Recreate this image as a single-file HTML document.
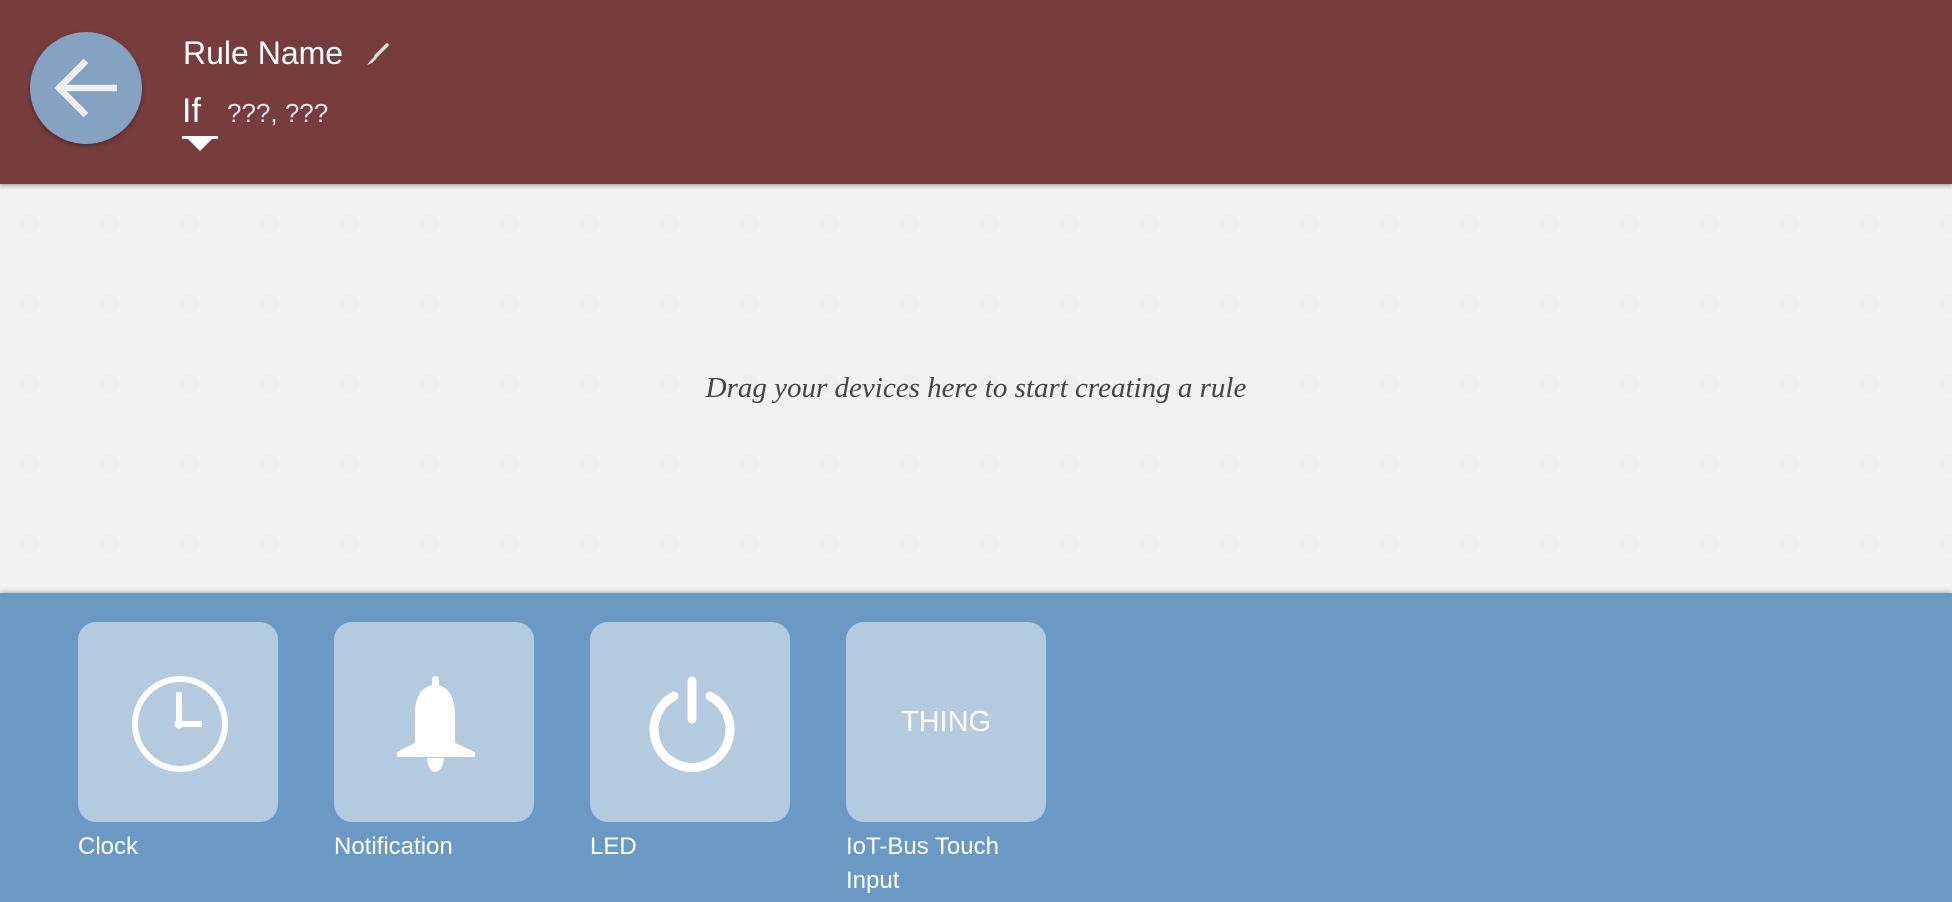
<!DOCTYPE html>
<html><head><style>
body{margin:0;width:1952px;height:902px;overflow:hidden;font-family:"Liberation Sans",sans-serif;background:#f2f2f2;position:relative}
#hdr{position:absolute;left:0;top:0;width:1952px;height:184px;background:#773c3c;box-shadow:0 2px 4px rgba(0,0,0,.3);z-index:2}
#back{position:absolute;left:30px;top:32px;width:112px;height:112px;border-radius:50%;background:#84a2c2;box-shadow:0 2px 4px rgba(0,0,0,.3)}
#canvas{position:absolute;left:0;top:184px;width:1952px;height:409px;background-color:#f2f2f2;background-image:radial-gradient(circle,#eeeeee 9px,transparent 10.5px);background-size:80px 80px;background-position:-10px 0px}
#msg{position:absolute;left:0;width:1952px;top:372px;text-align:center;font:italic 29px "Liberation Serif",serif;color:#444}
#pal{position:absolute;left:0;top:593px;width:1952px;height:309px;background:#6a9ac4;box-shadow:0 -2px 4px rgba(0,0,0,.2)}
.tile{position:absolute;top:29px;width:200px;height:200px;border-radius:18px;background:#b4cadf}
.lbl{position:absolute;top:237px;color:#fff;font-size:24px;line-height:34px;width:170px}
</style></head><body>
<div id="hdr">
 <div id="back"><svg width="112" height="112" viewBox="0 0 112 112"><path d="M28 56H87M56 29L29 56L56 83" stroke="#f0eeee" stroke-width="6.5" fill="none"/></svg></div>
 <div style="position:absolute;left:183px;top:35px;color:#fff;font-size:32px">Rule Name</div>
 <svg style="position:absolute;left:364px;top:42px" width="26" height="26" viewBox="0 0 26 26"><path d="M23 3L12 14" stroke="#ddd" stroke-width="3.5" stroke-linecap="round"/><path d="M11 14L6 19L3 23L8 21L13 16Z" fill="#ddd"/></svg>
 <div style="position:absolute;left:182px;top:92px;color:#fff;font-size:34px">If</div>
 <div style="position:absolute;left:227px;top:98px;color:#dde3ee;font-size:26px">???, ???</div>
 <svg style="position:absolute;left:182px;top:136px" width="36" height="16"><rect x="0" y="0" width="36" height="3" fill="#fff"/><path d="M6 3H30L18 15Z" fill="#fff"/></svg>
</div>
<div id="canvas"></div>
<div id="msg">Drag your devices here to start creating a rule</div>
<div id="pal">
 <div class="tile" style="left:78px"><svg width="200" height="200"><circle cx="102" cy="102" r="45" stroke="#fff" stroke-width="6" fill="none"/><path d="M101 70V102H124" stroke="#fff" stroke-width="6" fill="none"/><circle cx="101" cy="102" r="4.5" fill="#fff"/></svg></div>
 <div class="lbl" style="left:78px">Clock</div>
 <div class="tile" style="left:334px"><svg width="200" height="200"><rect x="98" y="54" width="7" height="18" rx="3.5" fill="#fff"/><path d="M101 63C89 63 81 74 81 92V121L63 130V135H141V130L121 121V92C121 74 113 63 101 63Z" fill="#fff"/><path d="M93 136H110C109 146 105 150 101 150C97 150 94 146 93 136Z" fill="#fff"/></svg></div>
 <div class="lbl" style="left:334px">Notification</div>
 <div class="tile" style="left:590px"><svg width="200" height="200"><path d="M84 74A38 38 0 1 0 120 74" stroke="#fff" stroke-width="9" fill="none" stroke-linecap="round"/><path d="M102 59V97" stroke="#fff" stroke-width="9" stroke-linecap="round"/></svg></div>
 <div class="lbl" style="left:590px">LED</div>
 <div class="tile" style="left:846px"><div style="position:absolute;left:0;width:200px;top:84px;text-align:center;color:#fff;font-size:29px">THING</div></div>
 <div class="lbl" style="left:846px">IoT-Bus Touch Input</div>
</div>
</body></html>
